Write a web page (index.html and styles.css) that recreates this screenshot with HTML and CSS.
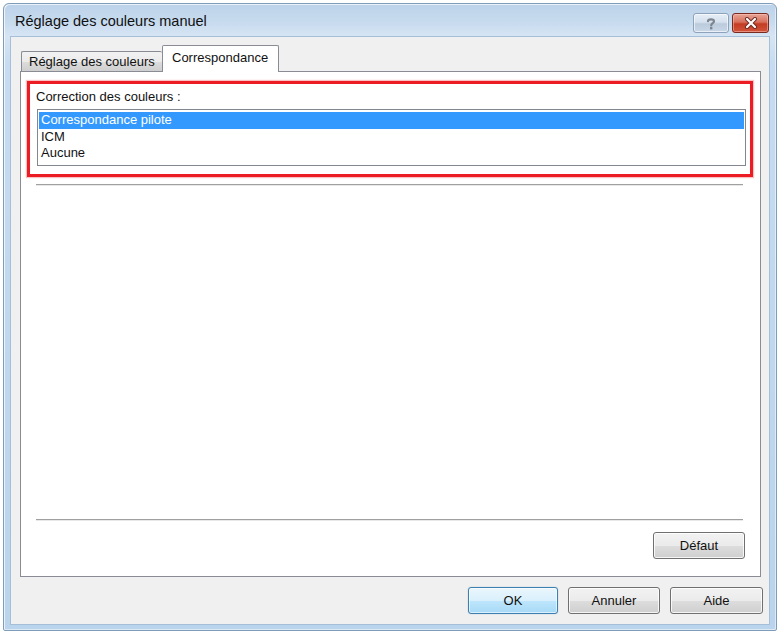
FILE: index.html
```html
<!DOCTYPE html>
<html lang="fr">
<head>
<meta charset="utf-8">
<title>Réglage des couleurs manuel</title>
<link rel="stylesheet" href="styles.css">
</head>
<body>
<div class="window">
  <div class="titlebar">
    <div class="title">Réglage des couleurs manuel</div>
    <div class="caption-buttons">
      <div class="cap-btn help">
        <svg width="12" height="13" viewBox="0 0 12 13">
          <path d="M3 4.2 C3 1.8 9 1.6 9 4.3 C9 6.2 6.2 6.1 6.2 8.4" fill="none" stroke="#7d8590" stroke-width="2.2" stroke-linecap="round"/>
          <rect x="5" y="10" width="2.4" height="2.4" fill="#7d8590"/>
        </svg>
      </div>
      <div class="cap-btn close">
        <svg width="14" height="12" viewBox="0 0 14 12">
          <path d="M3 2 L11 10 M11 2 L3 10" stroke="#6b2a22" stroke-width="4" stroke-linecap="round"/>
          <path d="M3 2 L11 10 M11 2 L3 10" stroke="#ffffff" stroke-width="2.2" stroke-linecap="round"/>
        </svg>
      </div>
    </div>
  </div>
  <div class="client">
    <div class="tabs">
      <div class="tab">Réglage des couleurs</div>
      <div class="tab active">Correspondance</div>
    </div>
    <div class="panel">
      <div class="highlight">
        <div class="label">Correction des couleurs :</div>
        <div class="listbox">
          <div class="item selected">Correspondance pilote</div>
          <div class="item">ICM</div>
          <div class="item">Aucune</div>
        </div>
      </div>
      <div class="separator top-sep"></div>
      <div class="spacer"></div>
      <div class="separator"></div>
      <div class="panel-buttons">
        <div class="button w92">Défaut</div>
      </div>
    </div>
    <div class="dialog-buttons">
      <div class="button default w90">OK</div>
      <div class="button w92">Annuler</div>
      <div class="button w93">Aide</div>
    </div>
  </div>
</div>
</body>
</html>
```

FILE: styles.css
```css
html, body {
  margin: 0;
  padding: 0;
  background: #ffffff;
}

body {
  font-family: "Liberation Sans", Arial, sans-serif;
  font-size: 13px;
  color: #111;
}

.window {
  margin: 3px 0 0 3px;
  width: 760px;
  height: 628px;
  box-sizing: border-box;
  padding: 0 6px 5px 6px;
  border: 1px solid #7f9db9;
  border-radius: 6px 6px 2px 2px;
  background: linear-gradient(to bottom, #bcd2e9 0px, #c9dcef 20px, #d6e5f4 32px, #c6dcf0 60px, #b9d4ec 100%);
  box-shadow: inset 1px 1px 0 rgba(255,255,255,0.7), inset -1px -1px 0 rgba(255,255,255,0.5);
  width: 774px;
}

.titlebar {
  height: 32px;
  display: flex;
  align-items: flex-start;
  justify-content: space-between;
}

.title {
  padding-left: 5px;
  padding-top: 9px;
  font-size: 14.5px;
  color: #101010;
}

.caption-buttons {
  display: flex;
  gap: 3px;
  margin-top: 9px;
  margin-right: 1px;
}

.cap-btn {
  height: 20px;
  box-sizing: border-box;
  border-radius: 3px;
  display: flex;
  align-items: center;
  justify-content: center;
}

.cap-btn.help {
  width: 36px;
  border: 1px solid #8ea3bb;
  background: linear-gradient(to bottom, #e6eef7 0%, #d5e1ee 45%, #bccbdc 55%, #c9d8e8 100%);
  box-shadow: inset 0 0 0 1px rgba(255,255,255,0.6);
}

.cap-btn.close {
  width: 37px;
  border: 1px solid #7a2a1f;
  background: linear-gradient(to bottom, #e7a597 0%, #d8705c 45%, #c43c23 55%, #d2553c 100%);
  box-shadow: inset 0 0 0 1px rgba(255,200,190,0.5);
}

.client {
  height: 589px;
  box-sizing: border-box;
  background: #f0f0f0;
  border: 1px solid #a6bfd8;
  display: flex;
  flex-direction: column;
  padding: 8px 6px 0 9px;
}

.tabs {
  display: flex;
  align-items: flex-end;
  height: 26px;
  padding-left: 1px;
  position: relative;
  z-index: 1;
}

.tab {
  box-sizing: border-box;
  height: 20px;
  padding: 0 7px;
  width: 141px;
  border: 1px solid #898c95;
  border-bottom: none;
  border-right: none;
  border-radius: 2px 2px 0 0;
  background: linear-gradient(to bottom, #f2f2f2 0%, #ebebeb 50%, #dddddd 51%, #cfcfcf 100%);
  line-height: 19px;
  color: #111;
}

.tab.active {
  width: 117px;
  height: 27px;
  margin-bottom: -1px;
  padding: 0 9px;
  border-right: 1px solid #898c95;
  background: #ffffff;
  line-height: 24px;
}

.panel {
  height: 506px;
  box-sizing: border-box;
  width: 741px;
  background: #ffffff;
  border: 1px solid #898c95;
  display: flex;
  flex-direction: column;
}

.highlight {
  margin: 9px 7px 0 6px;
  border: 3px solid #ec1c24;
  box-shadow: 0 0 1px 1px rgba(240,80,80,0.35);
  padding: 5px 4px 8px 7px;
  height: 96px;
  box-sizing: border-box;
  display: flex;
  flex-direction: column;
}

.label {
  height: 16px;
  line-height: 16px;
  margin-left: -1px;
}

.listbox {
  margin-top: 4px;
  height: 57px;
  box-sizing: border-box;
  border: 1px solid #828790;
  padding: 2px 1px;
  background: #fff;
}

.item {
  height: 16.5px;
  line-height: 16px;
  padding-left: 2px;
}

.item.selected {
  background: #3399ff;
  color: #ffffff;
}

.separator {
  height: 1px;
  margin: 0 17px 0 15px;
  background: #a0a0a0;
  border-bottom: 1px solid #e8e8e8;
}

.top-sep {
  margin-top: 7px;
}

.spacer {
  flex: 1;
}

.panel-buttons {
  display: flex;
  justify-content: flex-end;
  padding-right: 15px;
  margin-top: 11px;
  margin-bottom: 17px;
}

.button {
  height: 27px;
  box-sizing: border-box;
  border: 1px solid #707070;
  border-radius: 3px;
  background: linear-gradient(to bottom, #f2f2f2 0%, #ebebeb 50%, #dddddd 51%, #cfcfcf 100%);
  box-shadow: inset 0 0 0 1px rgba(255,255,255,0.8);
  display: flex;
  align-items: center;
  justify-content: center;
  color: #111;
}

.button.default {
  border-color: #3c7fb1;
  background: linear-gradient(to bottom, #eaf6fd 0%, #d9f0fc 50%, #bee6fd 51%, #a7d9f5 100%);
  box-shadow: inset 0 0 0 1px rgba(255,255,255,0.6), 0 0 1px rgba(60,127,177,0.6);
}

.w90 { width: 90px; }
.w92 { width: 92px; }
.w93 { width: 93px; }

.dialog-buttons {
  display: flex;
  justify-content: flex-end;
  gap: 10px;
  margin-top: 10px;
  padding-right: 0;
}
```
